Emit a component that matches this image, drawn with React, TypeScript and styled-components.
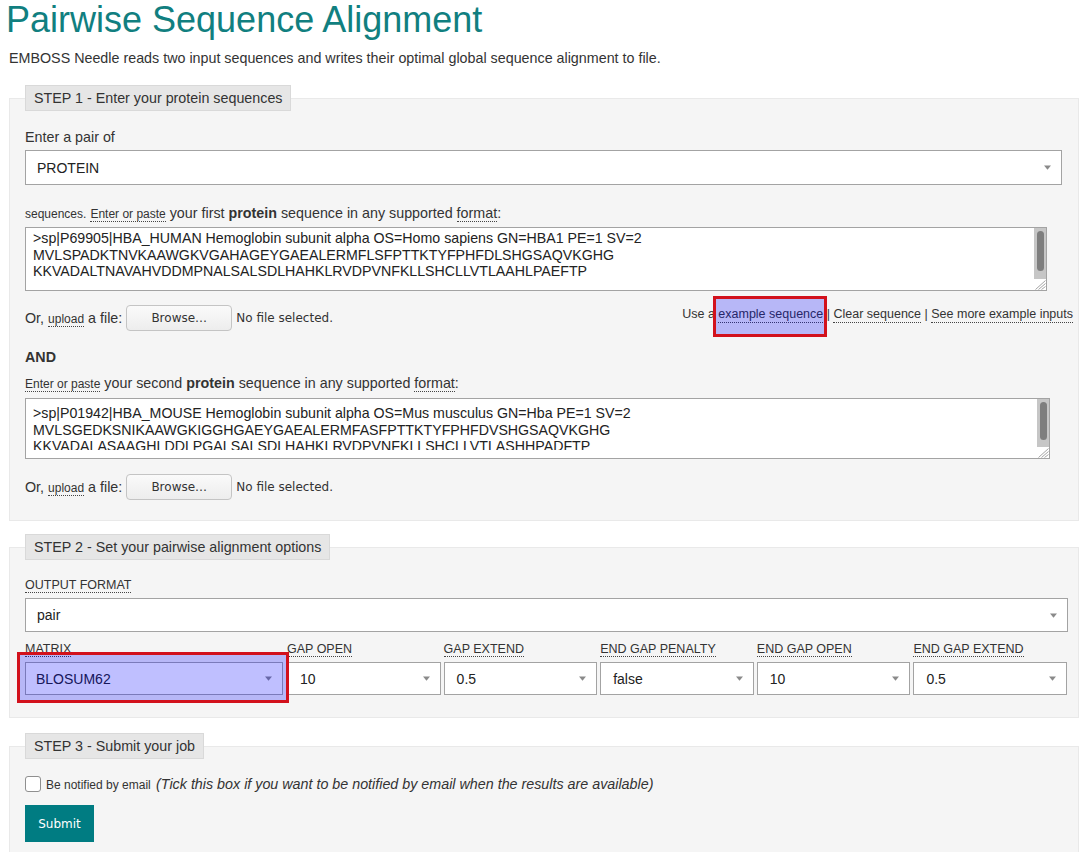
import React from 'react';
import styled, { createGlobalStyle } from 'styled-components';

const GlobalStyle = createGlobalStyle`
  html, body { margin: 0; padding: 0; background: #fff; }
  body {
    font-family: "Liberation Sans", Arial, sans-serif;
    font-size: 14.3px;
    color: #333;
  }
  * { box-sizing: border-box; }
`;

const Page = styled.div`
  padding: 0 8px 40px 9px;
`;

const Title = styled.h1`
  margin: 3px 0 0 -3px;
  font-size: 36px;
  line-height: 34px;
  font-weight: normal;
  color: #117f80;
`;

const Intro = styled.p`
  margin: 13px 0 0;
  line-height: 16px;
`;

const Step = styled.fieldset<{ $mt: number; $pt: number; $pb: number }>`
  margin: ${(p) => p.$mt}px 0 0;
  padding: ${(p) => p.$pt}px 8px ${(p) => p.$pb}px 15px;
  border: 1px solid #e9e9e9;
  background: #f5f5f5;
  min-width: 0;
`;

const StepLegend = styled.legend`
  margin: 0;
  padding: 4px 8px;
  line-height: 16px;
  font-size: 14.3px;
  background: #e6e6e6;
  border: 1px solid #d9d9d9;
  color: #333;
`;

const FieldLabel = styled.div<{ $mt?: number }>`
  margin-top: ${(p) => p.$mt ?? 0}px;
  line-height: 16px;
`;

const Small = styled.span`
  font-size: 12px;
`;

const Dotted = styled.span<{ $size?: number }>`
  font-size: ${(p) => (p.$size ? `${p.$size}px` : 'inherit')};
  border-bottom: 1px dotted #444;
`;

const SelectBox = styled.div<{ $h: number; $trim: number; $mt?: number; $pl?: number }>`
  display: flex;
  align-items: center;
  justify-content: space-between;
  width: calc(100% - ${(p) => p.$trim}px);
  height: ${(p) => p.$h}px;
  margin-top: ${(p) => p.$mt ?? 0}px;
  padding: 0 10px 0 ${(p) => p.$pl ?? 11}px;
  background: #fff;
  border: 1px solid #a3a3a3;
  font-size: 14px;
  color: #222;
`;

const CaretIcon = styled.svg`
  flex: none;
  display: block;
`;

const Caret = () => (
  <CaretIcon width="7" height="5" viewBox="0 0 7 5">
    <path d="M0 0.5h7L3.5 4.8z" fill="#8a8a8a" />
  </CaretIcon>
);

const SeqBox = styled.div<{ $h: number; $trim: number; $mt: number }>`
  display: flex;
  align-items: flex-start;
  width: calc(100% - ${(p) => p.$trim}px);
  height: ${(p) => p.$h}px;
  margin-top: ${(p) => p.$mt}px;
  border: 1px solid #a3a3a3;
  background: #fff;
`;

const SeqText = styled.textarea<{ $clip: number; $pt: number }>`
  flex: 1;
  min-width: 0;
  height: calc(100% - ${(p) => p.$clip}px);
  margin: 0;
  padding: ${(p) => p.$pt}px 7px 0;
  border: 0;
  outline: none;
  background: transparent;
  color: #222;
  font-family: "Liberation Sans", Arial, sans-serif;
  font-size: 14.2px;
  line-height: 16.5px;
  white-space: pre;
  overflow: hidden;
  resize: none;
`;

const ScrollColumn = styled.div`
  flex: none;
  align-self: stretch;
  width: 12px;
  display: flex;
  flex-direction: column;
`;

const ScrollTrack = styled.div`
  flex: 1;
  background: #c6c6c6;
  padding: 3px 2px 0 3px;
`;

const ScrollThumb = styled.div<{ $pct: number }>`
  height: ${(p) => p.$pct}%;
  background: #7e7e7e;
  border-radius: 4px;
`;

const GripIcon = styled.svg`
  display: block;
  flex: none;
`;

const Grip = () => (
  <GripIcon width="12" height="11" viewBox="0 0 12 11">
    <path d="M11.5 1.5L1.5 10.5M11.5 4.5L4.5 10.5M11.5 7.5L7.5 10.5" stroke="#9a9a9a" strokeWidth="0.9" />
  </GripIcon>
);

const UploadRow = styled.div<{ $mt: number }>`
  display: flex;
  align-items: center;
  justify-content: space-between;
  height: 26px;
  margin-top: ${(p) => p.$mt}px;
`;

const UploadLeft = styled.div`
  display: flex;
  align-items: center;
  gap: 4px;
`;

const BrowseButton = styled.button`
  width: 106px;
  height: 26px;
  margin: 0;
  padding: 0;
  border: 1px solid #c4c4c4;
  border-radius: 4px;
  background: linear-gradient(#fafafa, #ededed);
  font-family: "DejaVu Sans", sans-serif;
  font-size: 12px;
  color: #333;
`;

const NoFile = styled.span`
  font-family: "DejaVu Sans", sans-serif;
  font-size: 12px;
  color: #333;
`;

const ExampleLinks = styled.div`
  align-self: flex-start;
  margin: 2px -3px 0 0;
  font-size: 12.5px;
  line-height: 15px;
  color: #333;
`;

const LinkText = styled.span`
  border-bottom: 1px dotted #444;
  padding-bottom: 1px;
`;

const Mark = styled.span<{ $inset: string; $block?: boolean }>`
  position: relative;
  display: ${(p) => (p.$block ? 'block' : 'inline')};

  &::after {
    content: '';
    position: absolute;
    inset: ${(p) => p.$inset};
    background: rgba(0, 0, 255, 0.25);
    border: 3px solid #d2111c;
    pointer-events: none;
  }
`;

const AndTitle = styled.div`
  margin-top: 18px;
  line-height: 16px;
  font-weight: bold;
`;

const OptLabel = styled.div<{ $mt?: number }>`
  margin-top: ${(p) => p.$mt ?? 0}px;
  font-size: 12.5px;
  line-height: 15px;
  color: #333;
`;

const OptionsGrid = styled.div`
  display: grid;
  grid-template-columns: 262px repeat(5, 1fr);
  margin-top: 10px;
`;

const OptCell = styled.div`
  display: flex;
  flex-direction: column;
  gap: 5px;
  min-width: 0;
`;

const NotifyRow = styled.label`
  display: flex;
  align-items: center;
  height: 16px;
  gap: 5px;
  font-size: 12px;
  color: #333;
`;

const Check = styled.input`
  appearance: none;
  flex: none;
  width: 16px;
  height: 16px;
  margin: 0;
  border: 1px solid #8f8f8f;
  border-radius: 3px;
  background: #fff;
`;

const NotifyHint = styled.em`
  margin-left: 2px;
  font-size: 14.3px;
`;

const SubmitButton = styled.button`
  display: block;
  width: 69px;
  height: 37px;
  margin-top: 13px;
  padding: 0;
  border: 0;
  background: #007c82;
  color: #fff;
  font-family: "DejaVu Sans", sans-serif;
  font-size: 12px;
`;

const seq1 = `>sp|P69905|HBA_HUMAN Hemoglobin subunit alpha OS=Homo sapiens GN=HBA1 PE=1 SV=2
MVLSPADKTNVKAAWGKVGAHAGEYGAEALERMFLSFPTTKTYFPHFDLSHGSAQVKGHG
KKVADALTNAVAHVDDMPNALSALSDLHAHKLRVDPVNFKLLSHCLLVTLAAHLPAEFTP
AVHASLDKFLASVSTVLTSKYR`;

const seq2 = `>sp|P01942|HBA_MOUSE Hemoglobin subunit alpha OS=Mus musculus GN=Hba PE=1 SV=2
MVLSGEDKSNIKAAWGKIGGHGAEYGAEALERMFASFPTTKTYFPHFDVSHGSAQVKGHG
KKVADALASAAGHLDDLPGALSALSDLHAHKLRVDPVNFKLLSHCLLVTLASHHPADFTP
AVHASLDKFLASVSTVLTSKYR`;

const options = [
  { label: 'GAP OPEN', value: '10' },
  { label: 'GAP EXTEND', value: '0.5' },
  { label: 'END GAP PENALTY', value: 'false' },
  { label: 'END GAP OPEN', value: '10' },
  { label: 'END GAP EXTEND', value: '0.5' },
];

const Sequence = ({
  h,
  trim,
  mt,
  clip,
  pt,
  thumb,
  value,
}: {
  h: number;
  trim: number;
  mt: number;
  clip: number;
  pt: number;
  thumb: number;
  value: string;
}) => (
  <SeqBox $h={h} $trim={trim} $mt={mt}>
    <SeqText $clip={clip} $pt={pt} defaultValue={value} spellCheck={false} />
    <ScrollColumn>
      <ScrollTrack>
        <ScrollThumb $pct={thumb} />
      </ScrollTrack>
      <Grip />
    </ScrollColumn>
  </SeqBox>
);

const Upload = ({ mt, links }: { mt: number; links?: boolean }) => (
  <UploadRow $mt={mt}>
    <UploadLeft>
      <span>
        Or, <Dotted $size={12}>upload</Dotted> a file:
      </span>
      <BrowseButton type="button">Browse…</BrowseButton>
      <NoFile>No file selected.</NoFile>
    </UploadLeft>
    {links && (
      <ExampleLinks>
        Use a{' '}
        <Mark $inset="-11px -4px -16px -5px">
          <LinkText>example sequence</LinkText>
        </Mark>{' '}
        | <LinkText>Clear sequence</LinkText> | <LinkText>See more example inputs</LinkText>
      </ExampleLinks>
    )}
  </UploadRow>
);

export default function App() {
  return (
    <>
      <GlobalStyle />
      <Page>
        <Title>Pairwise Sequence Alignment</Title>
        <Intro>
          EMBOSS Needle reads two input sequences and writes their optimal global sequence alignment to file.
        </Intro>

        <Step $mt={19} $pt={18} $pb={20}>
          <StepLegend>STEP 1 - Enter your protein sequences</StepLegend>
          <FieldLabel>Enter a pair of</FieldLabel>
          <SelectBox $h={35} $trim={8} $mt={5}>
            <span>PROTEIN</span>
            <Caret />
          </SelectBox>
          <FieldLabel $mt={20}>
            <Small>sequences.</Small> <Dotted $size={12}>Enter or paste</Dotted> your first <b>protein</b> sequence in
            any supported <Dotted>format</Dotted>:
          </FieldLabel>
          <Sequence h={64} trim={23} mt={5} clip={7} pt={2} thumb={84} value={seq1} />
          <Upload mt={14} links />

          <AndTitle>AND</AndTitle>
          <FieldLabel $mt={10}>
            <Dotted $size={12}>Enter or paste</Dotted> your second <b>protein</b> sequence in any supported{' '}
            <Dotted>format</Dotted>:
          </FieldLabel>
          <Sequence h={61} trim={20} mt={6} clip={8} pt={6} thumb={84} value={seq2} />
          <Upload mt={15} />
        </Step>

        <Step $mt={13} $pt={18} $pb={22}>
          <StepLegend>STEP 2 - Set your pairwise alignment options</StepLegend>
          <OptLabel>
            <Dotted>OUTPUT FORMAT</Dotted>
          </OptLabel>
          <SelectBox $h={34} $trim={2} $mt={5}>
            <span>pair</span>
            <Caret />
          </SelectBox>
          <OptionsGrid>
            <OptCell>
              <OptLabel>
                <Dotted>MATRIX</Dotted>
              </OptLabel>
              <Mark $block $inset="-10px -2px -8px -8px">
                <SelectBox $h={33} $trim={4} $pl={10}>
                  <span>BLOSUM62</span>
                  <Caret />
                </SelectBox>
              </Mark>
            </OptCell>
            {options.map((o) => (
              <OptCell key={o.label}>
                <OptLabel>
                  <Dotted>{o.label}</Dotted>
                </OptLabel>
                <SelectBox $h={33} $trim={3} $pl={12}>
                  <span>{o.value}</span>
                  <Caret />
                </SelectBox>
              </OptCell>
            ))}
          </OptionsGrid>
        </Step>

        <Step $mt={15} $pt={17} $pb={20}>
          <StepLegend>STEP 3 - Submit your job</StepLegend>
          <NotifyRow>
            <Check type="checkbox" />
            <span>
              Be notified by email{' '}
              <NotifyHint>(Tick this box if you want to be notified by email when the results are available)</NotifyHint>
            </span>
          </NotifyRow>
          <SubmitButton type="button">Submit</SubmitButton>
        </Step>
      </Page>
    </>
  );
}
